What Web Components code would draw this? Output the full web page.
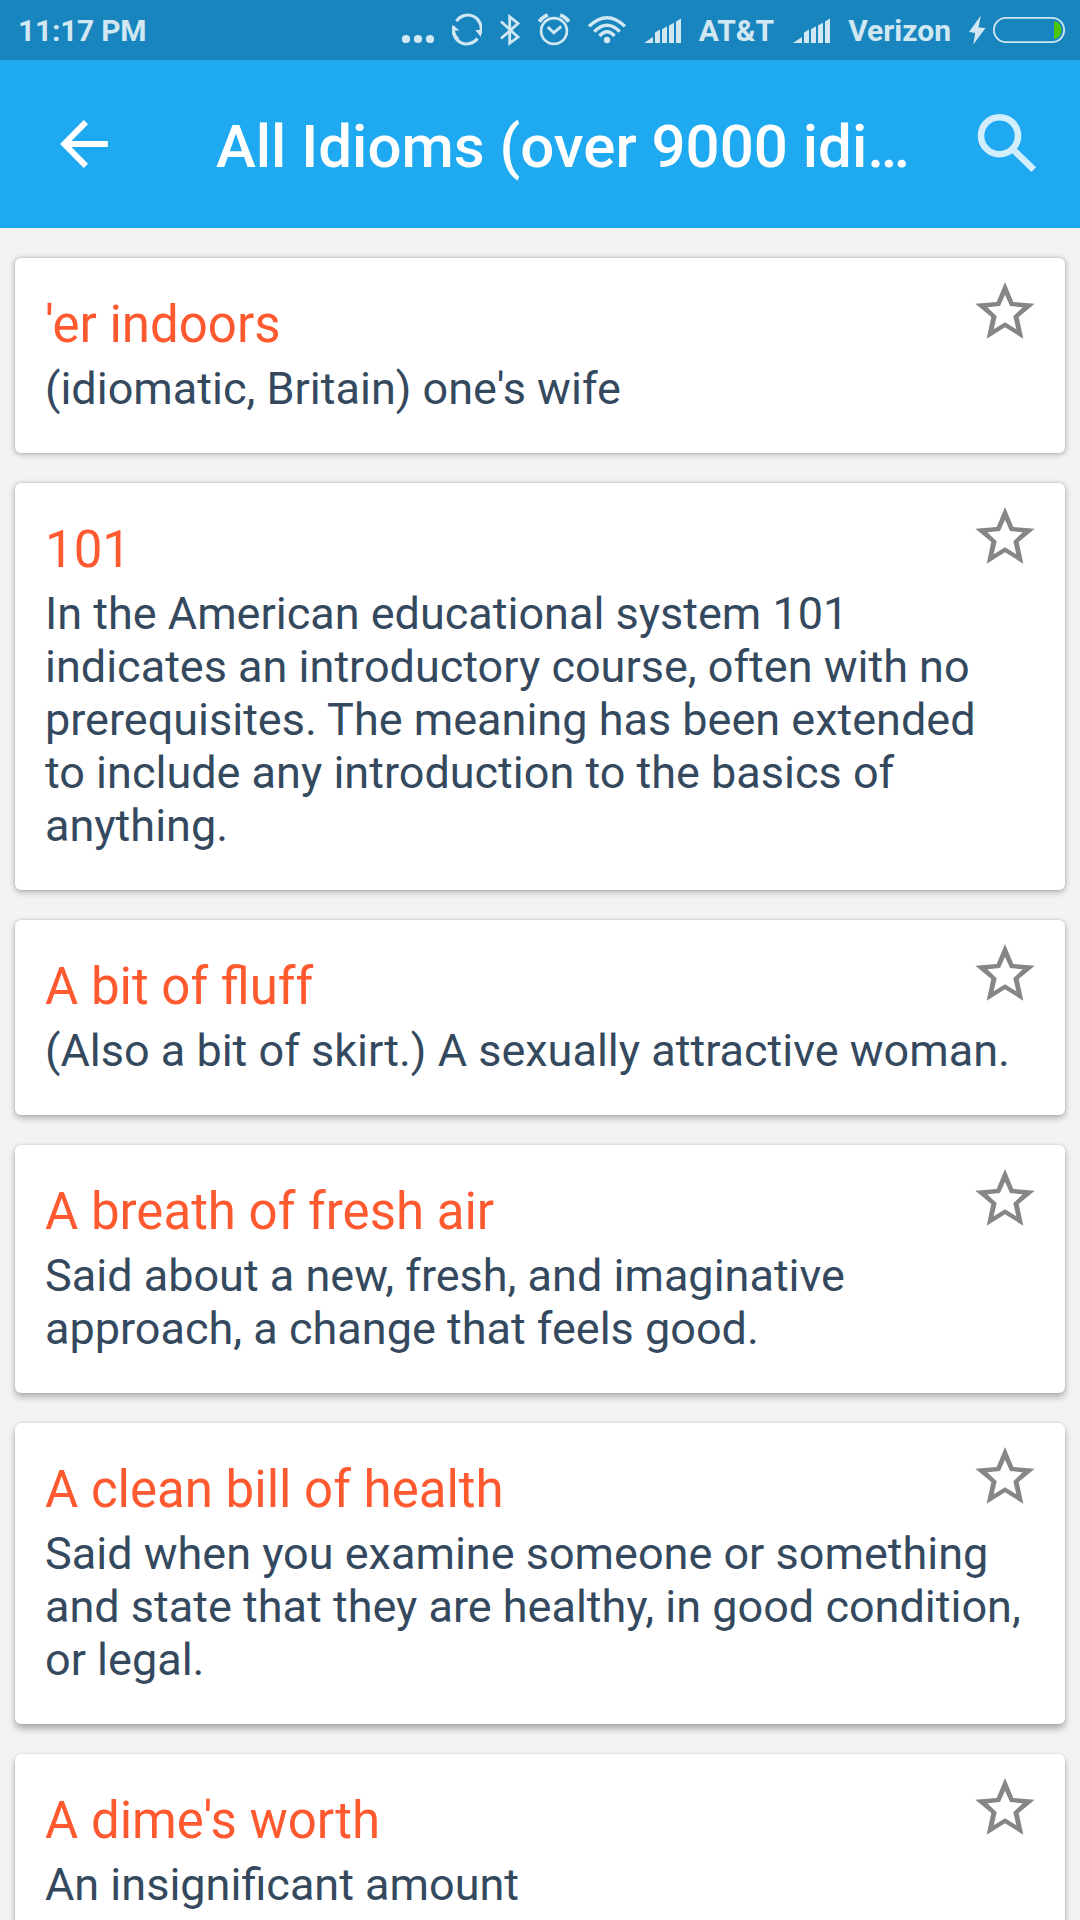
<!DOCTYPE html>
<html lang="en">
<head>
<meta charset="utf-8">
<title>All Idioms</title>
<style>
    html, body { margin: 0; padding: 0; }
    body {
        width: 1080px;
        height: 1920px;
        overflow: hidden;
        background: #f3f3f3;
        font-family: Roboto, sans-serif;
    }
</style>
</head>
<body>
<idiom-app></idiom-app>

<script>
class StatusBar extends HTMLElement {
    constructor() {
        super();
        this.attachShadow({mode: 'open'});

        const signal = `
            <path d="M0 25 L9 19 V25 Z M11 14.6 L16 11.5 V25 H11 Z M18 11.3 L23 8.2 V25 H18 Z M25 7.5 L30 4.8 V25 H25 Z M32 3.5 L37 0.5 V25 H32 Z"/>
        `;

        this.shadowRoot.innerHTML = `
            <style>
                :host {
                    display: flex;
                    align-items: center;
                    box-sizing: border-box;
                    height: 60px;
                    padding: 0 15px 0 18px;
                    background: #1985bf;
                    color: #d1e7f2;
                    font-size: 30px;
                    font-weight: 700;
                    line-height: 40px;
                }
                svg { display: block; flex: none; fill: currentColor; }
                .line { fill: none; stroke: currentColor; }
                .spacer { flex: 1; }
                span { display: block; padding-top: 2px; white-space: nowrap; }
                .time { letter-spacing: -.25px; }
                .dots, .sync, .bt, .alarm, .wifi, .carrier { margin-right: 18px; }
                .signal { margin: 1px 18px 0 0; }
                .first { margin-right: 19px; }
                .bolt { margin-right: 7px; }
            </style>
            <span class="time">11:17 PM</span>
            <div class="spacer"></div>
            <svg class="dots" width="32" height="60" viewBox="402 0 32 60">
                <circle cx="406" cy="39" r="4.1"/><circle cx="418" cy="39" r="4.1"/><circle cx="430" cy="39" r="4.1"/>
            </svg>
            <svg class="sync" width="30" height="60" viewBox="452 0 30 60">
                <path class="line" stroke-width="3" d="M458.5 39.7 A13.4 13.4 0 0 1 454 26.2 M456.4 21.2 A13.4 13.4 0 0 1 480.1 33.5 M477.5 38.5 A13.4 13.4 0 0 1 453.8 27"/>
                <path d="M452.4 24.8 L459.4 30.5 L452.2 30.5 Z M475.3 30 L482 30 L480.8 37 Z"/>
                <path stroke="#1985bf" stroke-width="2.2" d="M453 20.5 L458.5 26 M475.5 34 L481 39.5"/>
            </svg>
            <svg class="bt" width="20" height="60" viewBox="500 0 20 60">
                <path class="line" stroke-width="2.8" d="M501 21.5 L518 37 L509.7 43.3 V16.7 L518 23.5 L501 38.5"/>
            </svg>
            <svg class="alarm" width="32" height="60" viewBox="538 0 32 60">
                <circle class="line" stroke-width="2.7" cx="554" cy="31" r="12.9"/>
                <path class="line" stroke-width="3" d="M547.8 27 L553.8 32.8 L561.2 26.3"/>
                <path class="line" stroke-width="4" d="M539.3 21.8 Q542 17.2 547.8 15 M568.7 21.8 Q566 17.2 560.2 15"/>
            </svg>
            <svg class="wifi" width="38" height="60" viewBox="588 0 38 60">
                <circle cx="607" cy="40" r="3.2"/>
                <path class="line" stroke-width="3.3" d="M589 26.3 Q607 9 625 26.3 M594.2 31.7 Q607 18.8 619.8 31.7"/>
                <path class="line" stroke-width="3.5" d="M599.5 36 Q607 27.5 614.5 36"/>
            </svg>
            <svg class="signal" width="37" height="25" viewBox="0 0 37 25">${signal}</svg>
            <span class="carrier first">AT&amp;T</span>
            <svg class="signal" width="37" height="25" viewBox="0 0 37 25">${signal}</svg>
            <span class="carrier">Verizon</span>
            <svg class="bolt" width="17" height="60" viewBox="969 0 17 60">
                <path d="M980.8 15.5 L969 32 L975.2 33 L973.3 44.5 L985.5 28 L978.5 27.5 Z"/>
            </svg>
            <svg width="72" height="60" viewBox="993 0 72 60">
                <rect class="line" stroke-width="1.8" x="993.9" y="17.9" width="70.2" height="24.2" rx="12.1"/>
                <path fill="#4dc500" d="M1054 21 Q1061.5 23 1061.5 30 Q1061.5 37 1054 39.3 Z"/>
            </svg>
        `;
    }
}
customElements.define('status-bar', StatusBar);

class AppToolbar extends HTMLElement {
    constructor() {
        super();
        this.attachShadow({mode: 'open'});
        this.shadowRoot.innerHTML = `
            <style>
                :host {
                    display: flex;
                    align-items: center;
                    box-sizing: border-box;
                    height: 168px;
                    padding: 0 43px 0 60px;
                    background: #1fa9f1;
                    color: #fff;
                }
                svg { display: block; flex: none; }
                h1 {
                    flex: none;
                    width: 700px;
                    margin: 6px 61px 0 108px;
                    overflow: hidden;
                    text-overflow: ellipsis;
                    white-space: nowrap;
                    font-size: 60px;
                    font-weight: 500;
                    line-height: 80px;
                }
            </style>
            <svg width="48" height="168" viewBox="60.5 60 48 168">
                <path fill="none" stroke="#fff" stroke-width="6" d="M86.4 122.2 L64.8 144 L86.4 165.8 M64 144 H108.3"/>
            </svg>
            <h1><slot></slot></h1>
            <svg width="60" height="168" viewBox="977 60 60 168">
                <g fill="none" stroke="#d2edfc">
                    <circle cx="999.5" cy="135.7" r="18.5" stroke-width="6.6"/>
                    <path stroke-width="6.6" d="M1013 149.5 L1033.8 169.6"/>
                </g>
            </svg>
        `;
    }
}
customElements.define('app-toolbar', AppToolbar);

class IdiomCard extends HTMLElement {
    constructor() {
        super();
        this.attachShadow({mode: 'open'});
        this.shadowRoot.innerHTML = `
            <style>
                :host {
                    display: grid;
                    grid-template-columns: 1fr 60px;
                    box-sizing: border-box;
                    padding: 37px 30px 38px;
                    border-radius: 6px;
                    background: #fff;
                    box-shadow: 0 var(--depth, 2px) 7px rgba(0, 0, 0, .28), 0 0 3px rgba(0, 0, 0, .16);
                }
                h2 {
                    margin: 0;
                    color: #ff5930;
                    font-size: 51px;
                    font-weight: 400;
                    line-height: 60px;
                }
                p {
                    grid-column: 1 / 3;
                    margin: 7px 11px 0 0;
                    color: #34495e;
                    font-size: 45px;
                    line-height: 53px;
                }
                svg { display: block; margin-top: -15px; }
            </style>
            <h2></h2>
            <svg width="60" height="60" viewBox="225 121 180 180">
                <path fill="#868686" fill-rule="evenodd" d="M315 127 L340 187 L404 192 L356 232 L370 297 L315 263 L260 297 L274 232 L226 192 L290 187 Z
                    M315 165 L300 199 L262 203 L290 230 L281 269 L315 248 L349 269 L340 230 L368 203 L330 199 Z"/>
            </svg>
            <p><slot></slot></p>
        `;
    }

    static get observedAttributes() {
        return ['name', 'depth'];
    }

    attributeChangedCallback(name, oldValue, newValue) {
        if (name === 'name') {
            this.shadowRoot.querySelector('h2').textContent = newValue;
        }
        if (name === 'depth') {
            this.style.setProperty('--depth', newValue + 'px');
        }
    }
}
customElements.define('idiom-card', IdiomCard);

class IdiomApp extends HTMLElement {
    constructor() {
        super();
        this.attachShadow({mode: 'open'});
        this.shadowRoot.innerHTML = `
            <style>
                :host { display: block; }
                main {
                    display: flex;
                    flex-direction: column;
                    gap: 30px;
                    padding: 30px 15px;
                }
            </style>
            <status-bar></status-bar>
            <app-toolbar>All Idioms (over 9000 idioms)</app-toolbar>
            <main>
                <idiom-card depth="1" name="'er indoors">(idiomatic, Britain) one's wife</idiom-card>
                <idiom-card depth="2" name="101">In the American educational system 101 indicates an introductory course, often with no prerequisites. The meaning has been extended to include any introduction to the basics of anything.</idiom-card>
                <idiom-card depth="3" name="A bit of fluff">(Also a bit of skirt.) A sexually attractive woman.</idiom-card>
                <idiom-card depth="4" name="A breath of fresh air">Said about a new, fresh, and imaginative approach, a change that feels good.</idiom-card>
                <idiom-card depth="5" name="A clean bill of health">Said when you examine someone or something and state that they are healthy, in good condition, or legal.</idiom-card>
                <idiom-card depth="6" name="A dime's worth">An insignificant amount</idiom-card>
            </main>
        `;
    }
}
customElements.define('idiom-app', IdiomApp);
</script>
</body>
</html>
